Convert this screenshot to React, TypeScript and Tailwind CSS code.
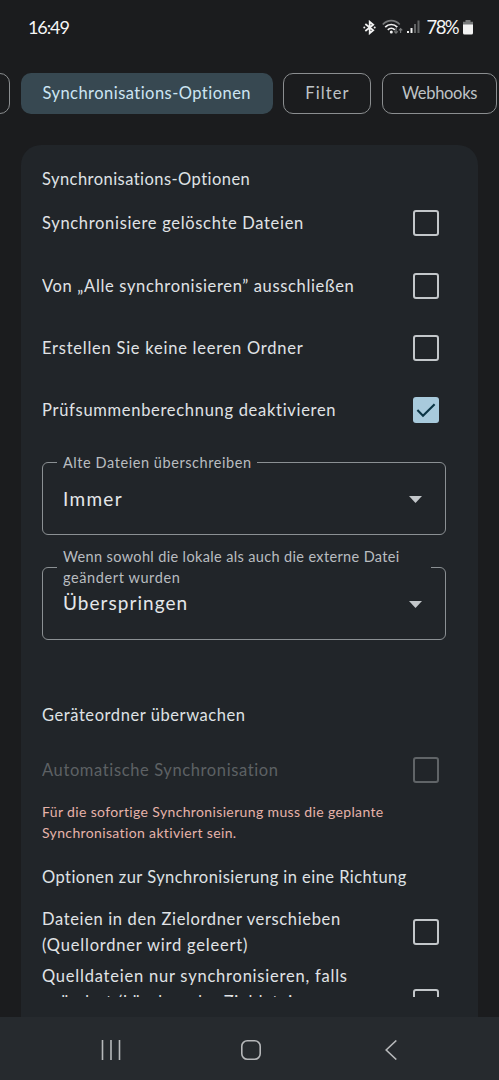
import type { ReactNode } from 'react';

function Checkbox({ checked = false, disabled = false }: { checked?: boolean; disabled?: boolean }) {
  if (checked) {
    return (
      <span className="flex size-[26px] shrink-0 items-center justify-center rounded-[3px] bg-[#a8cadc]">
        <svg viewBox="0 0 26 26" className="size-[26px]" fill="none" stroke="#0b3545" strokeWidth="2.1">
          <path d="M4.4 13.1 10 18.7 21.6 7.2" />
        </svg>
      </span>
    );
  }
  return (
    <span
      className={`size-[26px] shrink-0 rounded-[3px] border-2 ${disabled ? 'border-[#606467]' : 'border-[#c3c7ca]'}`}
    />
  );
}

function OptionRow({ children, className, checked, disabled }: {
  children: ReactNode;
  className: string;
  checked?: boolean;
  disabled?: boolean;
}) {
  return (
    <label
      className={`flex items-center justify-between pr-[7px] text-[16.5px] leading-[26px] whitespace-nowrap ${
        disabled ? 'text-[#5d6164]' : 'text-[#e0e3e6]'
      } ${className}`}
    >
      <span>{children}</span>
      <Checkbox checked={checked} disabled={disabled} />
    </label>
  );
}

function SelectField({ label, value, valueTracking, legend, className }: {
  label: ReactNode;
  value: string;
  valueTracking: string;
  legend: string;
  className: string;
}) {
  return (
    <div className={`relative flex h-[73px] shrink-0 items-center justify-between rounded-[6px] border-[1.5px] border-[#8b9093] pr-[23px] pl-[20px] ${className}`}>
      <div className={`absolute left-[14px] bg-[#212529] pr-[5px] pl-[6px] text-[14.5px] leading-[21px] whitespace-nowrap text-[#b9bdc0] ${legend}`}>
        {label}
      </div>
      <span className={`relative text-[19px] text-[#e4e7ea] ${valueTracking}`}>{value}</span>
      <svg viewBox="0 0 13 7" className="mt-[2px] h-[7px] w-[13px]" fill="#c3c7ca">
        <path d="M0 0h13L6.5 7z" />
      </svg>
    </div>
  );
}

function StatusBar() {
  return (
    <header className="flex h-[73px] shrink-0 items-start justify-between pt-[14px] pr-[26px] pl-[28px] text-[#f5f5f5]">
      <span className="text-[18px] leading-[26px] tracking-[-1.1px]">16:49</span>
      <div className="flex h-[26px] items-center">
        <svg viewBox="0 0 14 16" className="mr-[6px] h-[15px] w-[13px]" fill="none" stroke="#f2f2f2" strokeWidth="1.9">
          <path d="M2.5 4.3 11 11 7.2 14.2V1.8L11 5 2.5 11.7" />
          <circle cx="1.4" cy="8" r="1.1" fill="#f2f2f2" stroke="none" />
          <circle cx="12.6" cy="8" r="1.1" fill="#f2f2f2" stroke="none" />
        </svg>
        <svg viewBox="0 0 21 16" className="mr-[4px] h-[16px] w-[21px]" fill="none" strokeWidth="1.7">
          <path d="M.8 5.5C5.5.3 13 .3 17.7 5.5" stroke="#77797a" />
          <path d="M3.2 8.2c3.4-3.6 8.7-3.6 12.1 0M5.8 10.8c2-2 5-2 7 0" stroke="#f2f2f2" />
          <circle cx="9.3" cy="13" r="1.5" fill="#f2f2f2" />
          <path d="M14 9v5M12.2 12.3 14 14.2l1.8-1.9M18.6 14V9.5M16.9 11.3l1.7-1.8 1.7 1.8" stroke="#77797a" strokeWidth="1.2" />
        </svg>
        <svg viewBox="0 0 13 14" className="mr-[7px] h-[14px] w-[13px]">
          <path d="M0 11h2v2H0zM3.5 8h2v5h-2z" fill="#f2f2f2" />
          <path d="M7 4h2v9H7zM10.5.5h2V13h-2z" fill="#626465" />
        </svg>
        <span className="mr-[5px] text-[18.5px] leading-[26px] tracking-[-1.6px]">78%</span>
        <svg viewBox="0 0 10 15" className="h-[15px] w-[10px]">
          <path d="M2.5 0h5v1.7H10V5H0V1.7h2.5z" fill="#77797a" />
          <path d="M0 4.5h10V13q0 1.5-1.5 1.5h-7Q0 14.5 0 13z" fill="#f2f2f2" />
        </svg>
      </div>
    </header>
  );
}

function Tabs() {
  const outline = 'shrink-0 rounded-[10px] border border-[#8b8e90] text-[#bfc3c6]';
  return (
    <nav className="flex h-[41px] w-[499px] shrink-0 overflow-hidden text-[16.5px] whitespace-nowrap">
      <div className={`-ml-[40px] w-[50px] ${outline}`} />
      <div className="ml-[11px] flex w-[251.5px] shrink-0 items-center justify-center rounded-[10px] bg-[#374851] tracking-[0.46px] text-[#cce5f3]">
        Synchronisations-Optionen
      </div>
      <div className={`ml-[10.5px] flex w-[88px] items-center justify-center pl-px tracking-[1.1px] ${outline}`}>Filter</div>
      <div className={`ml-[11px] flex w-[115px] items-center justify-center tracking-[-0.3px] ${outline}`}>Webhooks</div>
    </nav>
  );
}

function NavigationBar() {
  return (
    <footer className="flex h-[63px] shrink-0 items-center bg-[#262a2e] pt-[2px] pr-[98px] pl-[101px]">
      <svg viewBox="0 0 20 20" className="size-[20px]" stroke="#b6b8ba" strokeWidth="1.6">
        <path d="M1.5 0v20M10 0v20M18.5 0v20" />
      </svg>
      <svg viewBox="0 0 20 20" className="ml-[120px] size-[20px]" fill="none" stroke="#b6b8ba" strokeWidth="1.6">
        <rect x=".8" y=".8" width="18.4" height="18.4" rx="5.5" />
      </svg>
      <svg viewBox="0 0 12 20" className="ml-[124px] h-[20px] w-[12px]" fill="none" stroke="#b6b8ba" strokeWidth="1.6">
        <path d="M11.3.5 1.2 10l10.1 9.5" />
      </svg>
    </footer>
  );
}

export default function App() {
  return (
    <div className="flex h-[1080px] w-[499px] flex-col overflow-hidden bg-[#1b1c1e] font-['Lato','Noto_Sans',sans-serif]">
      <StatusBar />
      <Tabs />
      <main className="mx-[21px] mt-[31px] flex h-[872px] shrink-0 flex-col rounded-t-[20px] bg-[#212529] pt-[20px] pr-[32px] pb-[20px] pl-[21px] text-[16.5px]">
        <div className="flex h-[832px] flex-col overflow-hidden">
          <h2 className="h-[27px] shrink-0 pt-px leading-[27px] tracking-[0.45px] text-[#dfe2e5]">Synchronisations-Optionen</h2>
          <OptionRow className="h-[62.4px] shrink-0 tracking-[0.68px]">Synchronisiere gelöschte Dateien</OptionRow>
          <OptionRow className="h-[62.4px] shrink-0 tracking-[0.66px]">Von „Alle synchronisieren” ausschließen</OptionRow>
          <OptionRow className="h-[62.4px] shrink-0 tracking-[0.76px]">Erstellen Sie keine leeren Ordner</OptionRow>
          <OptionRow className="h-[62.4px] shrink-0 tracking-[0.7px]" checked>Prüfsummenberechnung deaktivieren</OptionRow>

          <div className="flex h-[254.4px] shrink-0 flex-col pt-[20.8px]">
            <SelectField
              className=""
              legend="-top-[11px]"
              label={<span className="tracking-[0.57px]">Alte Dateien überschreiben</span>}
              value="Immer"
              valueTracking="tracking-[1.3px]"
            />
            <SelectField
              className="mt-[31.4px]"
              legend="-top-[22px] w-[374px]"
              label={
                <>
                  <span className="tracking-[0.36px]">Wenn sowohl die lokale als auch die externe Datei</span>
                  <br />
                  <span className="tracking-[0.6px]">geändert wurden</span>
                </>
              }
              value="Überspringen"
              valueTracking="tracking-[1.05px]"
            />
          </div>

          <h2 className="h-[43px] shrink-0 pt-[6px] leading-[26px] tracking-[0.57px] text-[#dfe2e5]">Geräteordner überwachen</h2>
          <OptionRow className="h-[62px] shrink-0 tracking-[0.62px]" disabled>Automatische Synchronisation</OptionRow>
          <p className="h-[63px] shrink-0 text-[14px] leading-[21px] whitespace-nowrap text-[#e6b3aa]">
            <span className="tracking-[0.36px]">Für die sofortige Synchronisierung muss die geplante</span>
            <br />
            <span className="tracking-[0.36px]">Synchronisation aktiviert sein.</span>
          </p>
          <h2 className="h-[42px] shrink-0 leading-[26px] tracking-[0.45px] whitespace-nowrap text-[#dfe2e5]">Optionen zur Synchronisierung in eine Richtung</h2>
          <OptionRow className="h-[52px] shrink-0">
            <span className="tracking-[0.64px]">Dateien in den Zielordner verschieben</span>
            <br />
            <span className="tracking-[0.8px]">(Quellordner wird geleert)</span>
          </OptionRow>
          <OptionRow className="mt-[5px] h-[78px] shrink-0 tracking-[0.78px]">
            Quelldateien nur synchronisieren, falls<br />geändert (Löschen der Zieldateien<br />wird ignoriert)
          </OptionRow>
        </div>
      </main>
      <NavigationBar />
    </div>
  );
}
